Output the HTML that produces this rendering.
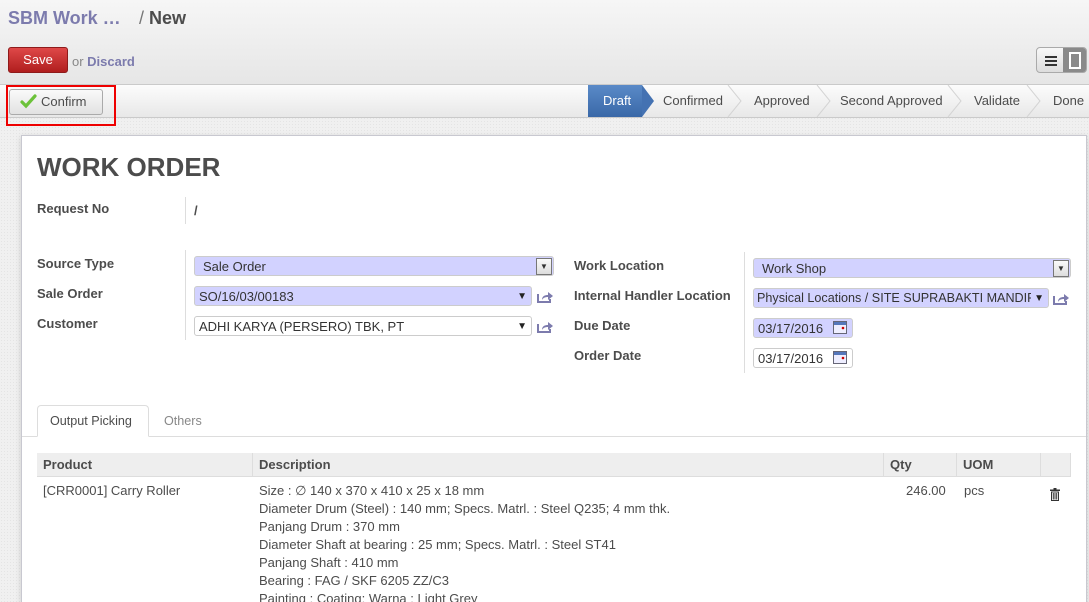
<!DOCTYPE html>
<html><head><meta charset="utf-8"><style>
*{box-sizing:border-box;margin:0;padding:0;white-space:nowrap}
html,body{width:1089px;height:602px;overflow:hidden}
body{font-family:"Liberation Sans",sans-serif;font-size:13px;color:#4c4c4c;background:#f0f0f0;position:relative;
background-image:radial-gradient(#e4e4e4 0.6px,transparent 0.7px);background-size:3px 3px}
.abs{position:absolute}
.hdr{left:0;top:0;width:1089px;height:85px;background:linear-gradient(#f6f6f6,#e6e6e6);border-bottom:1px solid #cacaca}
.bar{left:0;top:85px;width:1089px;height:33px;background:linear-gradient(#fcfcfc,#e8e8e8);border-bottom:1px solid #cacaca}
.sheet{left:21px;top:135px;width:1066px;height:467px;background:#fff;border:1px solid #c8c8d0;border-bottom:none;box-shadow:0 2px 6px rgba(0,0,0,.15)}
.lbl{font-weight:bold;color:#4c4c4c;font-size:13px}
.inp{height:20px;border:1px solid #ccc;border-radius:3px;font-size:13px;line-height:19px;padding-left:4px;color:#333;background:#fff;overflow:hidden}
.req{background:#d2d2ff}
.dd{position:absolute;right:4px;top:0;font-size:10px;color:#222}
.sel{position:absolute;right:1px;top:1px;width:16px;height:17px;border:1px solid #777;background:linear-gradient(#fafafa,#ddd);font-size:8px;text-align:center;line-height:15px}
.ext{width:16px;height:12px}
.step{top:85px;height:32px;line-height:31px;font-size:13px;color:#4c4c4c}
.th{top:453px;height:24px;background:#eee;border-bottom:1px solid #ddd;font-weight:bold;line-height:24px;padding-left:6px;color:#4c4c4c;border-right:1px solid #ddd}
.desc{left:259px;top:482px;line-height:18px;color:#4c4c4c}
</style></head><body>
<div class="abs hdr"></div>
<div class="abs" style="left:8px;top:8px;font-size:18px;font-weight:bold;color:#7c7bad">SBM Work …</div>
<div class="abs" style="left:139px;top:8px;font-size:18px;font-weight:bold;color:#4c4c4c"><span style="color:#777;font-weight:normal">/</span> New</div>
<div class="abs" style="left:8px;top:47px;width:60px;height:26px;background:linear-gradient(#df4848,#b01e1e);border:1px solid #8e1b1b;border-radius:3px;color:#fff;font-size:13px;text-align:center;line-height:24px">Save</div>
<div class="abs" style="left:72px;top:54px;color:#888">or <b style="color:#7c7bad">Discard</b></div>
<div class="abs" style="left:1036px;top:47px;width:51px;height:26px;border:1px solid #aaa;border-radius:4px;background:linear-gradient(#f8f8f8,#ddd);overflow:hidden">
<div class="abs" style="left:8px;top:8px;width:12px;height:2px;background:#333;box-shadow:0 4px 0 #333,0 8px 0 #333"></div>
<div class="abs" style="left:26px;top:0;width:25px;height:26px;background:#8a8a8a"></div>
<div class="abs" style="left:32px;top:4px;width:12px;height:17px;border:2px solid #fff"></div></div>
<div class="abs bar"></div>
<div class="abs" style="left:9px;top:89px;width:94px;height:26px;border:1px solid #aaa;border-radius:3px;background:linear-gradient(#fafafa,#e2e2e2);line-height:24px;padding-left:31px;color:#4c4c4c">Confirm</div>
<svg class="abs" style="left:20px;top:94px" width="17" height="15"><path d="M2 8 L6 12 L15 2" stroke="#6cc23a" stroke-width="3.2" fill="none" stroke-linecap="round"/></svg>
<div class="abs" style="left:6px;top:85px;width:110px;height:41px;border:2px solid #e00"></div>
<div class="abs" style="left:588px;top:85px;width:54px;height:32px;background:linear-gradient(#5a8ac8,#3a68a8);color:#fff;line-height:31px;padding-left:15px">Draft</div>
<svg class="abs" style="left:642px;top:85px" width="12" height="32"><path d="M0 0 L12 16 L0 32Z" fill="#4472b2"/></svg>
<div class="abs step" style="left:663px">Confirmed</div>
<div class="abs step" style="left:754px">Approved</div>
<div class="abs step" style="left:840px">Second Approved</div>
<div class="abs step" style="left:974px">Validate</div>
<div class="abs step" style="left:1053px">Done</div>
<svg class="abs" style="left:727px;top:85px" width="360" height="32"><g stroke="#d4d4d4" fill="none"><path d="M1 0 L14 16 L1 32"/><path d="M90 0 L103 16 L90 32"/><path d="M221 0 L234 16 L221 32"/><path d="M300 0 L313 16 L300 32"/></g></svg>
<div class="abs sheet"></div>
<div class="abs" style="left:37px;top:152px;font-size:26px;font-weight:bold;color:#4c4c4c">WORK ORDER</div>
<div class="abs lbl" style="left:37px;top:201px">Request No</div>
<div class="abs" style="left:185px;top:197px;width:1px;height:27px;background:#ddd"></div>
<div class="abs" style="left:194px;top:203px;font-weight:bold">/</div>
<div class="abs" style="left:185px;top:250px;width:1px;height:90px;background:#ddd"></div>
<div class="abs lbl" style="left:37px;top:256px">Source Type</div>
<div class="abs lbl" style="left:37px;top:286px">Sale Order</div>
<div class="abs lbl" style="left:37px;top:316px">Customer</div>
<div class="abs inp req" style="left:194px;top:256px;width:360px;padding-left:8px">Sale Order<div class="sel">▼</div></div>
<div class="abs inp req" style="left:194px;top:286px;width:338px">SO/16/03/00183<span class="dd">▼</span></div>
<div class="abs inp" style="left:194px;top:316px;width:338px">ADHI KARYA (PERSERO) TBK, PT<span class="dd">▼</span></div>
<svg class="abs ext" style="left:537px;top:291px" viewBox="0 0 16 12"><path d="M1 3 V11 H13 V8" stroke="#7c7bad" stroke-width="2" fill="none"/><path d="M5 9 C5 5 8 4 11 4 V1 L16 5 L11 9 V6 C8 6 6 7 5 9Z" fill="#7c7bad"/></svg>
<svg class="abs ext" style="left:537px;top:321px" viewBox="0 0 16 12"><path d="M1 3 V11 H13 V8" stroke="#7c7bad" stroke-width="2" fill="none"/><path d="M5 9 C5 5 8 4 11 4 V1 L16 5 L11 9 V6 C8 6 6 7 5 9Z" fill="#7c7bad"/></svg>
<div class="abs" style="left:744px;top:252px;width:1px;height:121px;background:#ddd"></div>
<div class="abs lbl" style="left:574px;top:258px">Work Location</div>
<div class="abs lbl" style="left:574px;top:288px">Internal Handler Location</div>
<div class="abs lbl" style="left:574px;top:318px">Due Date</div>
<div class="abs lbl" style="left:574px;top:348px">Order Date</div>
<div class="abs inp req" style="left:753px;top:258px;width:318px;padding-left:8px">Work Shop<div class="sel">▼</div></div>
<div class="abs inp req" style="left:753px;top:288px;width:296px;padding-left:3px;font-size:12.6px">Physical Locations / SITE SUPRABAKTI MANDIRI<span class="dd" style="background:#d2d2ff;padding-left:3px">▼</span></div>
<svg class="abs ext" style="left:1053px;top:293px" viewBox="0 0 16 12"><path d="M1 3 V11 H13 V8" stroke="#7c7bad" stroke-width="2" fill="none"/><path d="M5 9 C5 5 8 4 11 4 V1 L16 5 L11 9 V6 C8 6 6 7 5 9Z" fill="#7c7bad"/></svg>
<div class="abs inp req" style="left:753px;top:318px;width:100px">03/17/2016</div>
<div class="abs inp" style="left:753px;top:348px;width:100px">03/17/2016</div>
<svg class="abs" style="left:833px;top:321px" width="14" height="13"><rect x=".5" y=".5" width="13" height="12" fill="#eef" stroke="#667"/><rect x="1" y="1" width="12" height="3" fill="#5577bb"/><circle cx="10" cy="7" r="1.3" fill="#c00"/></svg>
<svg class="abs" style="left:833px;top:351px" width="14" height="13"><rect x=".5" y=".5" width="13" height="12" fill="#eef" stroke="#667"/><rect x="1" y="1" width="12" height="3" fill="#5577bb"/><circle cx="10" cy="7" r="1.3" fill="#c00"/></svg>
<div class="abs" style="left:22px;top:436px;width:1064px;height:1px;background:#ddd"></div>
<div class="abs" style="left:37px;top:405px;width:112px;height:32px;border:1px solid #ddd;border-bottom:1px solid #fff;border-radius:4px 4px 0 0;background:#fff;line-height:31px;padding-left:12px;color:#4c4c4c;font-size:12.6px">Output Picking</div>
<div class="abs" style="left:164px;top:414px;color:#888;font-size:12.6px">Others</div>
<div class="abs th" style="left:37px;width:216px">Product</div>
<div class="abs th" style="left:253px;width:631px">Description</div>
<div class="abs th" style="left:884px;width:73px">Qty</div>
<div class="abs th" style="left:957px;width:84px">UOM</div>
<div class="abs th" style="left:1041px;width:30px"></div>
<div class="abs" style="left:43px;top:482px;line-height:18px">[CRR0001] Carry Roller</div>
<div class="abs desc">Size : ∅ 140 x 370 x 410 x 25 x 18 mm<br>Diameter Drum (Steel) : 140 mm; Specs. Matrl. : Steel Q235; 4 mm thk.<br>Panjang Drum : 370 mm<br>Diameter Shaft at bearing : 25 mm; Specs. Matrl. : Steel ST41<br>Panjang Shaft : 410 mm<br>Bearing : FAG / SKF 6205 ZZ/C3<br>Painting : Coating; Warna : Light Grey</div>
<div class="abs" style="left:906px;top:482px;line-height:18px">246.00</div>
<div class="abs" style="left:964px;top:482px;line-height:18px">pcs</div>
<svg class="abs" style="left:1050px;top:488px" width="10" height="13"><rect x="0" y="1.5" width="10" height="1.5" fill="#333"/><rect x="3.5" y="0" width="3" height="1.5" fill="#333"/><path d="M1.5 4 H8.5 V12.5 H1.5Z M3.3 5 V11.5 M5 5 V11.5 M6.7 5 V11.5" stroke="#333" stroke-width="1" fill="none"/></svg>
</body></html>
